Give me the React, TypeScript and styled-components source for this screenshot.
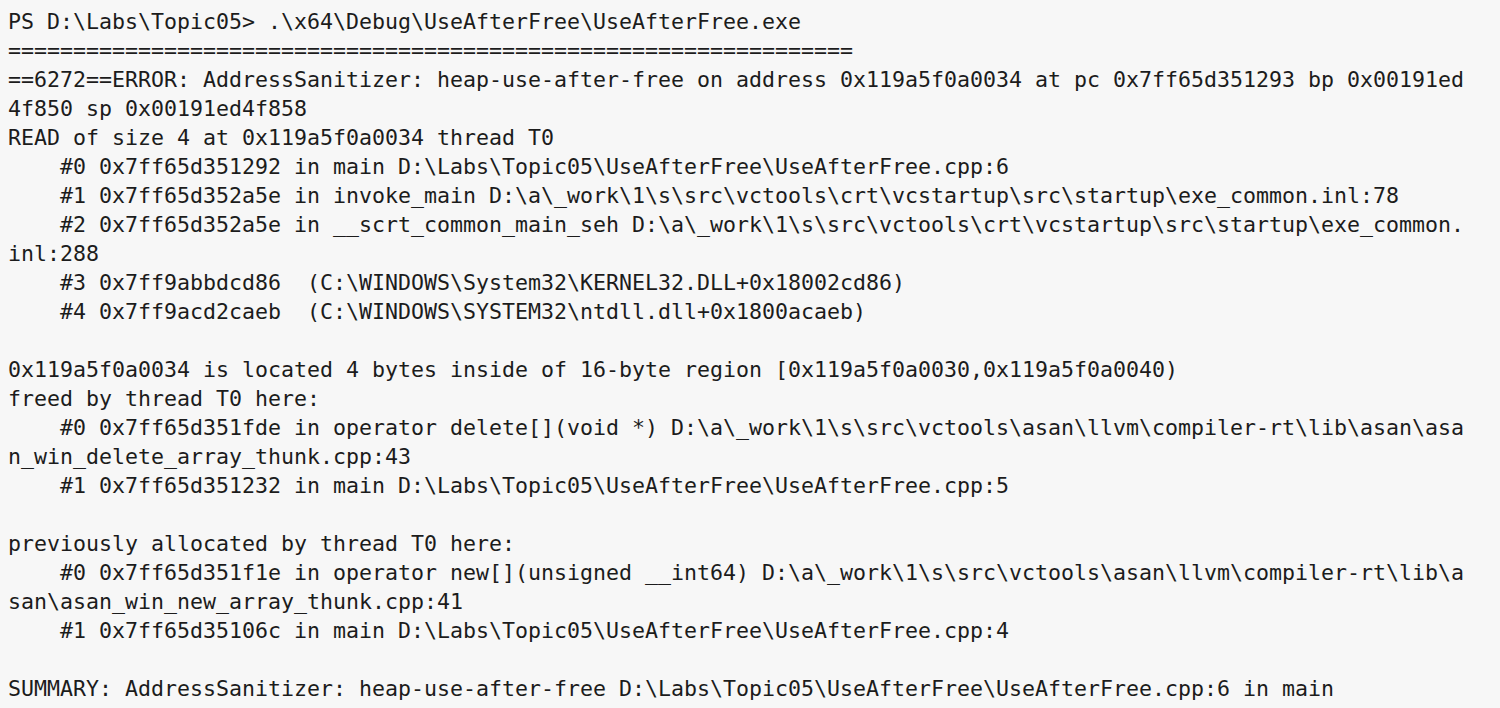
import React from "react";
import styled, { createGlobalStyle } from "styled-components";

const GlobalStyle = createGlobalStyle`
  html, body {
    margin: 0;
    padding: 0;
    background: #f7f7f7;
  }
  body {
    font-family: "DejaVu Sans Mono", "Liberation Mono", monospace;
  }
`;

const Terminal = styled.div`
  box-sizing: border-box;
  width: 1500px;
  height: 708px;
  overflow: hidden;
  padding: 7px 0 0 8px;
  background: #f7f7f7;
  color: #1c1c1c;
  font-family: "DejaVu Sans Mono", "Liberation Mono", monospace;
  font-size: 21.6px;
  line-height: 29px;
`;

const Line = styled.div`
  width: 112.4ch;
  min-height: 29px;
  white-space: pre-wrap;
  word-break: break-all;
`;

const lines: string[] = [
  "PS D:\\Labs\\Topic05> .\\x64\\Debug\\UseAfterFree\\UseAfterFree.exe",
  "=================================================================",
  "==6272==ERROR: AddressSanitizer: heap-use-after-free on address 0x119a5f0a0034 at pc 0x7ff65d351293 bp 0x00191ed4f850 sp 0x00191ed4f858",
  "READ of size 4 at 0x119a5f0a0034 thread T0",
  "    #0 0x7ff65d351292 in main D:\\Labs\\Topic05\\UseAfterFree\\UseAfterFree.cpp:6",
  "    #1 0x7ff65d352a5e in invoke_main D:\\a\\_work\\1\\s\\src\\vctools\\crt\\vcstartup\\src\\startup\\exe_common.inl:78",
  "    #2 0x7ff65d352a5e in __scrt_common_main_seh D:\\a\\_work\\1\\s\\src\\vctools\\crt\\vcstartup\\src\\startup\\exe_common.inl:288",
  "    #3 0x7ff9abbdcd86  (C:\\WINDOWS\\System32\\KERNEL32.DLL+0x18002cd86)",
  "    #4 0x7ff9acd2caeb  (C:\\WINDOWS\\SYSTEM32\\ntdll.dll+0x1800acaeb)",
  "",
  "0x119a5f0a0034 is located 4 bytes inside of 16-byte region [0x119a5f0a0030,0x119a5f0a0040)",
  "freed by thread T0 here:",
  "    #0 0x7ff65d351fde in operator delete[](void *) D:\\a\\_work\\1\\s\\src\\vctools\\asan\\llvm\\compiler-rt\\lib\\asan\\asan_win_delete_array_thunk.cpp:43",
  "    #1 0x7ff65d351232 in main D:\\Labs\\Topic05\\UseAfterFree\\UseAfterFree.cpp:5",
  "",
  "previously allocated by thread T0 here:",
  "    #0 0x7ff65d351f1e in operator new[](unsigned __int64) D:\\a\\_work\\1\\s\\src\\vctools\\asan\\llvm\\compiler-rt\\lib\\asan\\asan_win_new_array_thunk.cpp:41",
  "    #1 0x7ff65d35106c in main D:\\Labs\\Topic05\\UseAfterFree\\UseAfterFree.cpp:4",
  "",
  "SUMMARY: AddressSanitizer: heap-use-after-free D:\\Labs\\Topic05\\UseAfterFree\\UseAfterFree.cpp:6 in main",
];

export default function App() {
  return (
    <>
      <GlobalStyle />
      <Terminal>
        {lines.map((t, i) => (
          <Line key={i}>{t}</Line>
        ))}
      </Terminal>
    </>
  );
}
